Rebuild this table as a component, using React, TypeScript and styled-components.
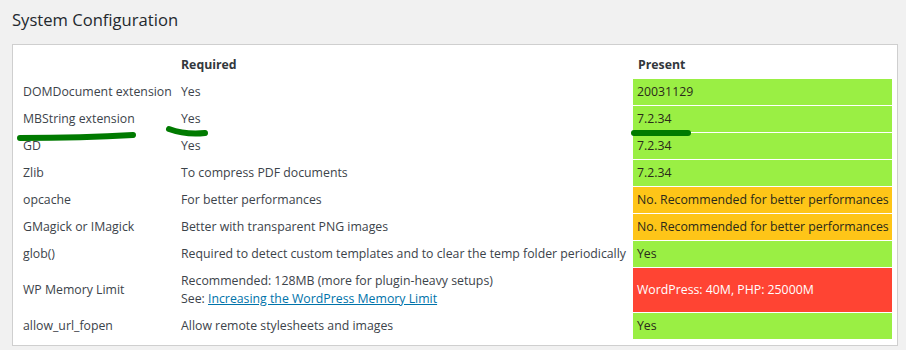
import React from "react";
import styled, { createGlobalStyle } from "styled-components";

const Global = createGlobalStyle`
  html, body { margin: 0; padding: 0; background: #f1f1f1; }
  body { font-family: "Open Sans", "Noto Sans", sans-serif; }
`;

const Page = styled.div`
  position: relative;
  padding: 0 8px 0 12px;
  width: 906px;
  box-sizing: border-box;
`;

const Title = styled.h2`
  margin: 0;
  height: 44px;
  display: flex;
  align-items: center;
  padding-bottom: 6px;
  box-sizing: border-box;
  font-size: 16.6px;
  font-weight: 400;
  color: #23282d;
`;

const Box = styled.div`
  background: #fff;
  border: 1px solid #cfcfcf;
  padding: 7px 5px 6px 5px;
`;

const Rows = styled.div`
  display: flex;
  flex-direction: column;
  gap: 1px;
`;

const Row = styled.div`
  display: grid;
  grid-template-columns: 158px 457px 259px;
`;

type Status = "none" | "ok" | "warn" | "error";

const bg: Record<Status, string> = {
  none: "transparent",
  ok: "#9aef44",
  warn: "#fec518",
  error: "#ff4433",
};

const Cell = styled.div<{ $status?: Status; $head?: boolean }>`
  display: flex;
  flex-direction: column;
  justify-content: center;
  padding: 4px 5px 4px ${(p) => (p.$status && p.$status !== "none" ? "4px" : "5px")};
  font-size: 12.3px;
  line-height: 18px;
  white-space: nowrap;
  background: ${(p) => bg[p.$status ?? "none"]};
  color: ${(p) => (p.$status === "error" ? "#fff" : p.$head ? "#32373c" : "#3c434a")};
  font-weight: ${(p) => (p.$head ? 700 : 400)};
  ${(p) => (p.$status && p.$status !== "none" && p.$status !== "error" ? "color: #2a2a1a;" : "")}
`;

const Link = styled.a`
  color: #0073aa;
  text-decoration: underline;
`;

const Marks = styled.svg`
  position: absolute;
  left: 0;
  top: 0;
  pointer-events: none;
`;

type Item = { name: string; req: React.ReactNode; present: string; status: Status };

const items: Item[] = [
  { name: "DOMDocument extension", req: "Yes", present: "20031129", status: "ok" },
  { name: "MBString extension", req: "Yes", present: "7.2.34", status: "ok" },
  { name: "GD", req: "Yes", present: "7.2.34", status: "ok" },
  { name: "Zlib", req: "To compress PDF documents", present: "7.2.34", status: "ok" },
  { name: "opcache", req: "For better performances", present: "No. Recommended for better performances", status: "warn" },
  { name: "GMagick or IMagick", req: "Better with transparent PNG images", present: "No. Recommended for better performances", status: "warn" },
  { name: "glob()", req: "Required to detect custom templates and to clear the temp folder periodically", present: "Yes", status: "ok" },
  {
    name: "WP Memory Limit",
    req: (
      <>
        <span>Recommended: 128MB (more for plugin-heavy setups)</span>
        <span>
          See: <Link href="#">Increasing the WordPress Memory Limit</Link>
        </span>
      </>
    ),
    present: "WordPress: 40M, PHP: 25000M",
    status: "error",
  },
  { name: "allow_url_fopen", req: "Allow remote stylesheets and images", present: "Yes", status: "ok" },
];

export default function App() {
  return (
    <Page>
      <Global />
      <Title>System Configuration</Title>
      <Box>
        <Rows>
          <Row>
            <Cell $head></Cell>
            <Cell $head>Required</Cell>
            <Cell $head>Present</Cell>
          </Row>
          {items.map((it) => (
            <Row key={it.name}>
              <Cell>{it.name}</Cell>
              <Cell>{it.req}</Cell>
              <Cell $status={it.status}>{it.present}</Cell>
            </Row>
          ))}
        </Rows>
      </Box>
      <Marks width="906" height="350" viewBox="0 0 906 350">
        <g fill="none" stroke="#007a00" strokeLinecap="round" strokeWidth="6">
          <path d="M20 138 C 60 138, 100 137, 133 135" />
          <path d="M169 129 C 180 133, 195 134, 205 133" />
          <path d="M634 133 C 655 133, 675 133, 688 133" />
        </g>
      </Marks>
    </Page>
  );
}
